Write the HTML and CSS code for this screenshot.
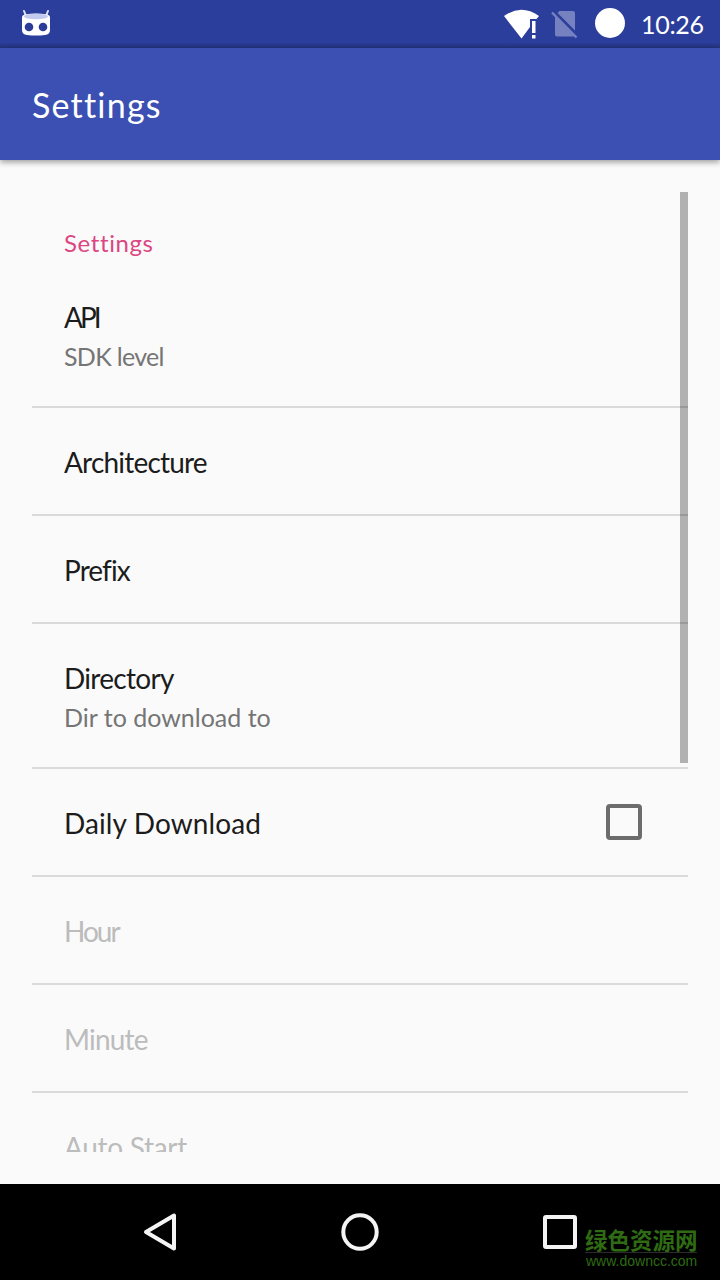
FILE: index.html
```html
<!DOCTYPE html>
<html lang="en">
<head>
    <meta charset="UTF-8">
    <title>Settings</title>
    <link rel="stylesheet" href="styles.css">
</head>
<body>

<div class="statusbar">
    <svg class="robot" width="32" height="32" viewBox="0 0 32 32">
        <path d="M4 3l2 5M28 3l-2 5" stroke="#dfe3fa" stroke-width="2" stroke-linecap="round"/>
        <path d="M2 9.500Q2 7 5 6.500Q16 4.500 27 6.500Q30 7 30 9.500V22Q30 26.500 25 27Q16 28 7 27Q2 26.500 2 22z" fill="#fff"/>
        <ellipse cx="16" cy="8.500" rx="12" ry="2.700" fill="#c3caef"/>
        <circle cx="9" cy="19" r="4.300" fill="#2b3d98"/>
        <circle cx="23" cy="19" r="4.300" fill="#2b3d98"/>
    </svg>
    <div class="status-icons">
        <svg width="36" height="32" viewBox="0 0 36 32">
            <path d="M0 8Q17.500-4.500 35 8L32.500 11H26V19L17.500 30.500z" fill="#fff"/>
            <path d="M28 13h3.500v12H28zM28 27h3.500v3.500H28z" fill="#fff"/>
        </svg>
        <svg width="28" height="30" viewBox="0 0 28 30">
            <path d="M8.500 2H22q2 0 2 2V21.500L6.500 4zM4 6.500L23.500 26.500Q23 27.500 22 27.500H6Q4 27.500 4 25.500z" fill="#7681c0"/>
            <path d="M1 3.500L25.500 28.500" stroke="#7681c0" stroke-width="2.500"/>
        </svg>
        <div class="battery"></div>
        <span class="time">10:26</span>
    </div>
</div>

<header>
    <h1>Settings</h1>
</header>

<div class="container">
    <div class="scrollbar"></div>
    <h2>Settings</h2>
    <div class="row two-line">
        <div class="title api">API</div>
        <div class="summary sdk">SDK level</div>
    </div>
    <div class="row">
        <div class="title arch">Architecture</div>
    </div>
    <div class="row">
        <div class="title prefix">Prefix</div>
    </div>
    <div class="row two-line">
        <div class="title directory">Directory</div>
        <div class="summary">Dir to download to</div>
    </div>
    <div class="row">
        <div class="title daily">Daily Download</div>
        <div class="checkbox"></div>
    </div>
    <div class="row disabled">
        <div class="title hour">Hour</div>
    </div>
    <div class="row disabled">
        <div class="title minute">Minute</div>
    </div>
    <div class="row disabled">
        <div class="title auto">Auto Start</div>
    </div>
</div>

<nav>
    <svg width="40" height="40" viewBox="0 0 40 40">
        <path d="M6 20L34 3.500V36.500z"/>
    </svg>
    <svg width="40" height="40" viewBox="0 0 40 40">
        <circle cx="20" cy="20" r="16.700"/>
    </svg>
    <svg width="40" height="40" viewBox="0 0 40 40">
        <rect x="5" y="5" width="30" height="30" rx="1"/>
    </svg>
    <div class="watermark">
        <div class="site">绿色资源网</div>
        <div class="url">www.downcc.com</div>
    </div>
</nav>

</body>
</html>
```
FILE: styles.css
```css
body {
    font-family: Lato, "Liberation Sans", sans-serif;
    margin: 0;
    height: 1280px;
    background: #fafafa;
    display: flex;
    flex-direction: column;
    overflow: hidden;
}
.statusbar {
    height: 48px;
    box-sizing: border-box;
    padding: 0 16px 0 20px;
    display: flex;
    align-items: center;
    justify-content: space-between;
    color: white;
    background: linear-gradient(#2b3e9b 42px, #25347f);
}
.robot {
    margin-top: -1px;
}
.status-icons {
    display: flex;
    align-items: center;
}
.status-icons svg:first-child {
    margin-right: 11px;
}
.battery {
    width: 30px;
    height: 30px;
    margin: 0 16px 2px 16px;
    border-radius: 50%;
    background: white;
}
.time {
    width: 63px;
    font-size: 25px;
    letter-spacing: -0.3px;
    white-space: nowrap;
}
header {
    height: 112px;
    padding-left: 32px;
    display: flex;
    align-items: center;
    color: white;
    background: #3b50b2;
    box-shadow: 0 2px 6px rgba(0, 0, 0, 0.4);
}
h1 {
    margin: 0;
    font-size: 34px;
    font-weight: 400;
    letter-spacing: 1.2px;
}
.container {
    position: relative;
    height: 960px;
    margin: 32px 32px;
    overflow: hidden;
    flex-shrink: 0;
}
.scrollbar {
    position: absolute;
    top: 0;
    right: 0;
    width: 8px;
    height: 571px;
    background: rgba(0, 0, 0, 0.29);
}
h2 {
    margin: 0;
    height: 71px;
    box-sizing: border-box;
    padding: 36px 0 0 32px;
    font-size: 24px;
    line-height: 30px;
    font-weight: 400;
    letter-spacing: 0.6px;
    color: #dc4683;
}
.row {
    height: 108px;
    box-sizing: border-box;
    padding: 2px 46px 0 32px;
    border-bottom: 2px solid #dadada;
    display: flex;
    align-items: center;
    justify-content: space-between;
}
.two-line {
    height: 145px;
    padding-top: 4px;
    flex-direction: column;
    align-items: flex-start;
    justify-content: center;
}
.title {
    font-size: 28px;
    line-height: 38px;
    white-space: nowrap;
    color: #1c1c1c;
}
.summary {
    font-size: 25px;
    line-height: 40px;
    white-space: nowrap;
    color: #757575;
}
.disabled .title {
    color: #bcbcbc;
}
.api {
    letter-spacing: -3px;
}
.sdk {
    letter-spacing: -0.7px;
}
.arch {
    letter-spacing: -0.8px;
}
.prefix {
    letter-spacing: -0.9px;
}
.directory {
    letter-spacing: -0.7px;
}
.daily {
    letter-spacing: 0.1px;
}
.hour {
    letter-spacing: -2px;
}
.minute {
    letter-spacing: -0.8px;
}
.auto {
    letter-spacing: -0.3px;
}
.checkbox {
    width: 28px;
    height: 28px;
    margin-bottom: 2px;
    border: 4px solid #6c6c6c;
    border-radius: 4px;
}
nav {
    position: relative;
    height: 96px;
    flex-shrink: 0;
    padding: 0 140px;
    display: flex;
    align-items: center;
    justify-content: space-between;
    background: black;
}
nav svg {
    fill: none;
    stroke: #f4f4f4;
    stroke-width: 4;
    stroke-linejoin: round;
}
.watermark {
    position: absolute;
    left: 585px;
    top: 39px;
    width: 112px;
    color: #2f6b12;
}
.site {
    font-family: "Noto Sans CJK SC", sans-serif;
    font-size: 22.5px;
    line-height: 32px;
    font-weight: 700;
    height: 29px;
    border-bottom: 1px solid #2a2a2a;
    white-space: nowrap;
}
.url {
    font-family: "Liberation Sans", Arial, sans-serif;
    font-size: 14px;
    line-height: 16px;
    padding-left: 1px;
    white-space: nowrap;
}
```
